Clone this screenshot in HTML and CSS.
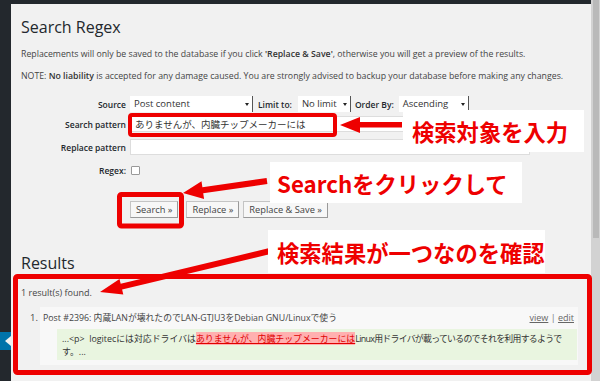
FILE: index.html
```html
<!DOCTYPE html>
<html lang="ja">
<head>
<meta charset="utf-8">
<title>Search Regex</title>
<link rel="stylesheet" href="styles.css">
</head>
<body>
<div class="adminbar"></div>
<div class="frame">
  <aside class="sidebar"><div class="current"></div></aside>
  <main class="content">
    <h2 class="title">Search Regex</h2>
    <p class="desc d1">Replacements will only be saved to the database if you click <strong>'Replace &amp; Save'</strong>, otherwise you will get a preview of the results.</p>
    <p class="desc d2">NOTE: <strong>No liability</strong> is accepted for any damage caused. You are strongly advised to backup your database before making any changes.</p>
    <div class="form">
      <div class="row r1">
        <span class="lbl">Source</span>
        <div class="sel sel-source">Post content<span class="arr"></span></div>
        <span class="lbl2 l-limit">Limit to:</span>
        <div class="sel sel-limit">No limit<span class="arr"></span></div>
        <span class="lbl2 l-order">Order By:</span>
        <div class="sel sel-order">Ascending<span class="arr"></span></div>
      </div>
      <div class="row r2">
        <span class="lbl">Search pattern</span>
        <div class="input">ありませんが、内臓チップメーカーには</div>
      </div>
      <div class="row r3">
        <span class="lbl">Replace pattern</span>
        <div class="input"></div>
      </div>
      <div class="row r4">
        <span class="lbl">Regex:</span>
        <span class="check"></span>
      </div>
    </div>
    <div class="buttons">
      <span class="btn b-search">Search »</span>
      <span class="btn b-replace">Replace »</span>
      <span class="btn b-save">Replace &amp; Save »</span>
    </div>
    <h3 class="results-title">Results</h3>
    <p class="found">1 result(s) found.</p>
    <div class="result">
      <span class="num">1.</span>
      <div class="item">
        <div class="item-head">
          <span class="post">Post #2396: 内蔵LANが壊れたのでLAN-GTJU3をDebian GNU/Linuxで使う</span>
          <span class="links"><span class="lnk">view</span> | <span class="lnk">edit</span></span>
        </div>
        <div class="match">...&lt;p&gt; &nbsp;logitecには対応ドライバは<span class="hl">ありませんが、内臓チップメーカーには</span><span class="rest">Linux用ドライバが載っているのでそれを利用するようで</span><br>す。...</div>
      </div>
    </div>
  </main>
  <div class="scrollbar"><div class="thumb"></div></div>
</div>

<svg class="overlay" width="600" height="381" viewBox="0 0 600 381">
  <rect x="130" y="115" width="205" height="20" rx="2" fill="none" stroke="#ee0000" stroke-width="4"/>
  <rect x="119.5" y="194.5" width="62" height="31.5" rx="2" fill="none" stroke="#ee0000" stroke-width="5"/>
  <rect x="15.5" y="276.5" width="574" height="96" rx="2" fill="none" stroke="#ee0000" stroke-width="5"/>
  <polygon fill="#ee0000" points="402,122 360,122 360,117 340,125 360,133 360,127.5 402,127.5"/>
  <polygon fill="#ee0000" points="266.6,178 202.4,187.2 201.5,181.3 183,193 204.1,199.1 203.2,193.2 267.4,184"/>
  <polygon fill="#ee0000" points="269.3,248.1 120.7,283.8 119.5,278.9 100,292 123.3,294.5 122.1,289.6 270.7,253.9"/>
</svg>
<div class="note n1">検索対象を入力</div>
<div class="note n2">Searchをクリックして</div>
<div class="note n3">検索結果が一つなのを確認</div>
</body>
</html>
```

FILE: styles.css
```css
html, body {
  margin: 0;
  padding: 0;
}
body {
  width: 600px;
  height: 381px;
  overflow: hidden;
  position: relative;
  background: #f1f1f1;
  font-family: "Open Sans", "Noto Sans CJK JP", sans-serif;
  color: #444;
}
.adminbar {
  height: 4px;
  width: 592px;
  background: #23282d;
}
.frame {
  display: flex;
  height: 377px;
}
.sidebar {
  width: 11px;
  background: #23282d;
  flex: none;
}
.current {
  margin-top: 328px;
  height: 18px;
  background: #0073aa;
  position: relative;
}
.current::after {
  content: "";
  position: absolute;
  right: 0;
  top: 4px;
  border-style: solid;
  border-width: 5px 6px 5px 0;
  border-color: transparent #f1f1f1 transparent transparent;
}
.content {
  flex: 1;
  padding: 0 10px;
  min-width: 0;
}
.scrollbar {
  width: 9px;
  flex: none;
  background: #d2d2d2;
  margin-top: -4px;
  padding: 0 1px 0 2px;
  box-sizing: border-box;
}
.thumb {
  height: 238px;
  background: #b9b9b9;
}
.title {
  margin: 13px 0 0;
  font-size: 16px;
  line-height: 20px;
  font-weight: 400;
  color: #23282d;
}
.desc {
  font-size: 8.75px;
  line-height: 13px;
  margin: 0;
  color: #444;
  white-space: nowrap;
}
.desc strong {
  font-weight: 600;
  color: #333;
}
.d1 { margin-top: 11px; }
.d2 { margin-top: 9px; }

.form { margin-top: 12px; }
.row {
  display: flex;
  align-items: center;
  height: 18px;
}
.r2 { margin-top: 2px; }
.r3 { margin-top: 5px; }
.r4 { margin-top: 5px; }
.lbl {
  width: 105px;
  margin-right: 4px;
  text-align: right;
  font-size: 8.5px;
  font-weight: 600;
  color: #23282d;
  flex: none;
}
.lbl2 {
  font-size: 8.5px;
  font-weight: 600;
  color: #23282d;
}
.l-limit { margin-left: 5px; margin-right: 6px; }
.l-order { margin-left: 4px; margin-right: 5px; }
.sel {
  position: relative;
  height: 16px;
  line-height: 16px;
  background: #fff;
  font-size: 9.5px;
  color: #333;
  padding-left: 4px;
  box-sizing: border-box;
  border-right: 1px solid #555;
}
.sel-source { width: 123px; }
.sel-limit { width: 53px; }
.sel-order { width: 70px; }
.arr {
  position: absolute;
  right: 3px;
  top: 7px;
  border-style: solid;
  border-width: 3px 2px 0 2px;
  border-color: #222 transparent transparent transparent;
}
.input {
  width: 400px;
  height: 16px;
  line-height: 15px;
  background: #fff;
  border: 1px solid #ddd;
  box-sizing: border-box;
  padding-left: 4px;
  font-family: "Noto Sans CJK JP", sans-serif;
  font-size: 9.5px;
  color: #333;
}
.check {
  width: 7px;
  height: 7px;
  border: 1px solid #999;
  border-radius: 1px;
  background: #fff;
  margin-left: 1px;
}
.buttons {
  display: flex;
  margin-top: 22px;
  padding-left: 109px;
}
.btn {
  height: 17px;
  line-height: 16px;
  padding: 0 5px;
  box-sizing: border-box;
  font-size: 9.3px;
  color: #444;
  background: #f7f7f7;
  border: 1px solid #c4c4c4;
  border-bottom-color: #999;
  border-right-color: #999;
  white-space: nowrap;
}
.b-search { margin-right: 8px; }
.b-replace { margin-right: 4px; }
.results-title {
  margin: 35px 0 0;
  font-size: 16px;
  line-height: 20px;
  font-weight: 400;
  color: #23282d;
}
.found {
  margin: 13px 0 0;
  font-size: 9px;
  line-height: 13px;
  color: #444;
}
.result {
  display: flex;
  margin-top: 8px;
}
.num {
  width: 19px;
  box-sizing: border-box;
  padding-left: 9px;
  padding-top: 4px;
  font-size: 9.5px;
  color: #444;
  flex: none;
}
.item {
  flex: 1;
  margin-right: 3px;
  background: #f8f8f8;
  padding: 0 1px 5px 3px;
}
.item-head {
  display: flex;
  justify-content: space-between;
  align-items: center;
  height: 21px;
  font-size: 8.8px;
  color: #444;
}
.links {
  padding-right: 3px;
  color: #777;
  font-size: 9px;
}
.lnk {
  text-decoration: underline;
  color: #666;
}
.match {
  margin-left: 14px;
  margin-top: 1px;
  background: #e9f5e0;
  padding: 3px 5px 2px;
  font-family: "Open Sans", "Noto Sans CJK JP", sans-serif;
  font-size: 8.9px;
  line-height: 13px;
  color: #333;
  white-space: nowrap;
  overflow: hidden;
}
.hl {
  background: #ffb0b0;
  color: #e00000;
  text-decoration: underline;
}
.rest {
  letter-spacing: -0.7px;
}
.overlay {
  position: absolute;
  left: 0;
  top: 0;
  pointer-events: none;
}
.note {
  position: absolute;
  background: #fff;
  color: #ee0000;
  font-family: "Noto Sans CJK JP", sans-serif;
  font-weight: 700;
  font-size: 22.3px;
  display: flex;
  align-items: center;
  box-sizing: border-box;
  white-space: nowrap;
}
.n1 { left: 403px; top: 110px; width: 181px; height: 42px; padding-left: 9px; }
.n2 { left: 270px; top: 162px; width: 252px; height: 41px; padding-left: 7px; }
.n3 { left: 268px; top: 230px; width: 277px; height: 43px; padding-left: 9px; }
```
